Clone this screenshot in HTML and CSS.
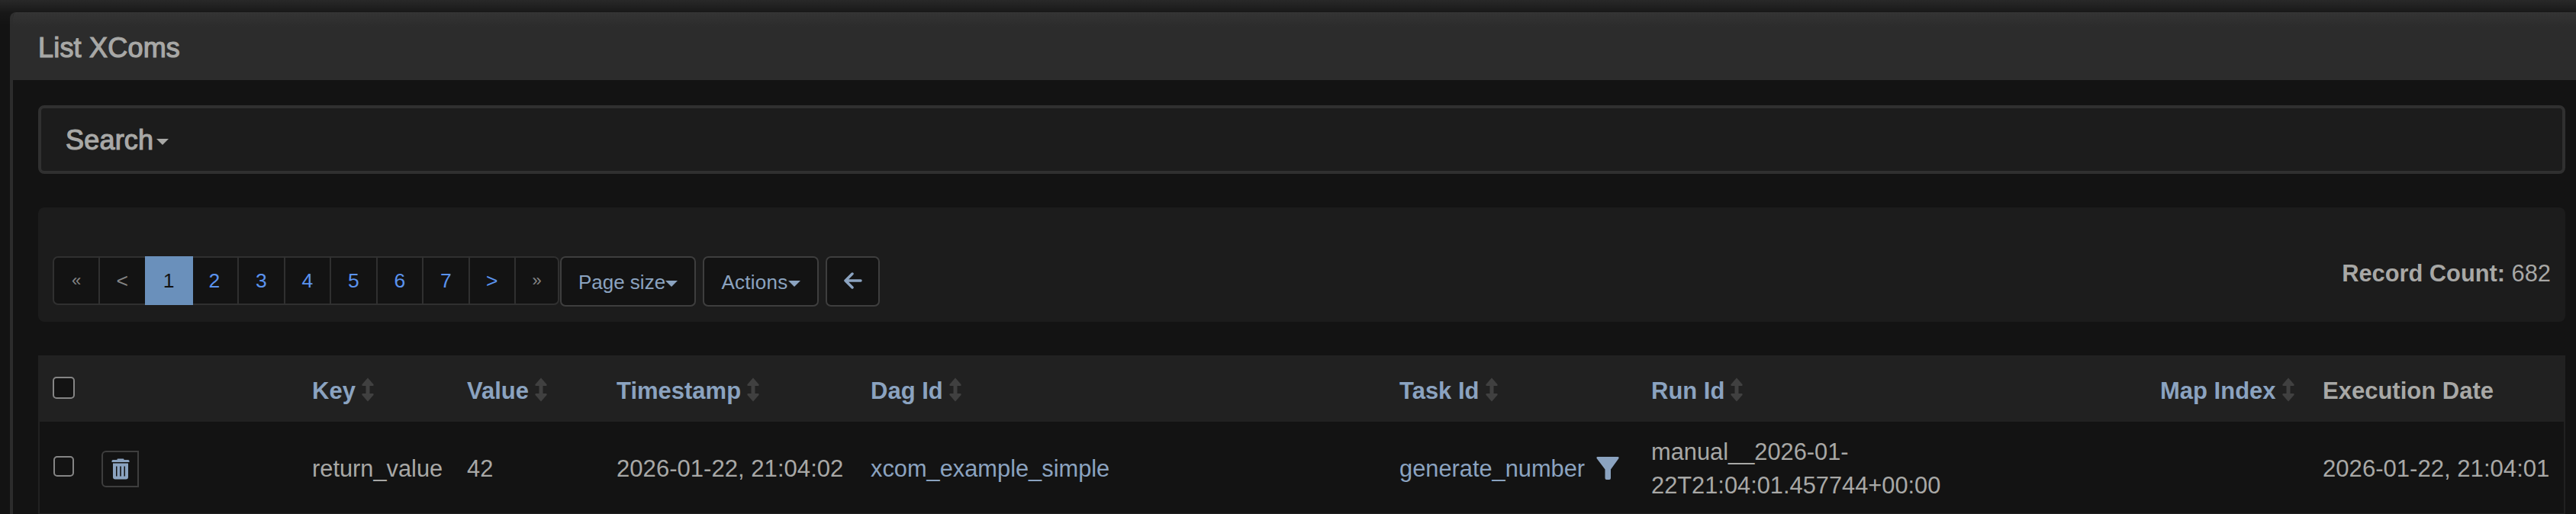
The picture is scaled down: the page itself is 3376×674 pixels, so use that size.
FILE: index.html
```html
<!DOCTYPE html>
<html lang="en">
<head>
<meta charset="UTF-8">
<title>List XComs</title>
<link rel="stylesheet" href="styles.css">
</head>
<body>
<svg class="sprite">
	<symbol id="sort" viewBox="0 0 16 32">
		<path d="M8 0.5 L15.5 9 Q16 11 14.500 11 H10.500 V21 H14.500 Q16 21 15.500 23 L8 31.500 L0.500 23 Q0 21 1.500 21 H5.500 V11 H1.500 Q0 11 0.500 9 Z"/>
	</symbol>
</svg>
<section class="panel">
	<header class="panel-heading">
		<h4 class="panel-title">List XComs</h4>
	</header>
	<div class="panel-body">
		<div class="search">
			<h4 class="panel-title">Search<b class="caret"></b></h4>
		</div>
		<div class="well">
			<ul class="pagination">
				<li class="disabled first"><a href="javascript:;">«</a></li>
				<li class="disabled"><a href="javascript:;">&lt;</a></li>
				<li class="active"><a href="javascript:;">1</a></li>
				<li><a href="javascript:;">2</a></li>
				<li><a href="javascript:;">3</a></li>
				<li><a href="javascript:;">4</a></li>
				<li><a href="javascript:;">5</a></li>
				<li><a href="javascript:;">6</a></li>
				<li><a href="javascript:;">7</a></li>
				<li><a href="javascript:;">&gt;</a></li>
				<li class="disabled last"><a href="javascript:;">»</a></li>
			</ul>
			<button type="button" class="btn size">Page size<b class="caret"></b></button>
			<button type="button" class="btn actions">Actions<b class="caret"></b></button>
			<button type="button" class="btn back">
				<svg width="24" height="22" viewBox="0 0 24 22"><path d="M11 2 L2 11 L11 20 M2 11 H22"/></svg>
			</button>
			<p class="count"><strong>Record Count:</strong> 682</p>
		</div>
		<table class="table">
			<colgroup>
				<col class="c-check"><col class="c-btn"><col class="c-key"><col class="c-value"><col class="c-time">
				<col class="c-dag"><col class="c-task"><col class="c-run"><col class="c-map"><col>
			</colgroup>
			<thead>
				<tr>
					<th><input type="checkbox" class="check all"></th>
					<th></th>
					<th><a href="javascript:;">Key<svg class="sort"><use href="#sort"/></svg></a></th>
					<th><a href="javascript:;">Value<svg class="sort"><use href="#sort"/></svg></a></th>
					<th><a href="javascript:;">Timestamp<svg class="sort"><use href="#sort"/></svg></a></th>
					<th><a href="javascript:;">Dag Id<svg class="sort"><use href="#sort"/></svg></a></th>
					<th><a href="javascript:;">Task Id<svg class="sort"><use href="#sort"/></svg></a></th>
					<th><a href="javascript:;">Run Id<svg class="sort"><use href="#sort"/></svg></a></th>
					<th><a href="javascript:;">Map Index<svg class="sort"><use href="#sort"/></svg></a></th>
					<th>Execution Date</th>
				</tr>
			</thead>
			<tbody>
				<tr>
					<td><input type="checkbox" class="check"></td>
					<td>
						<a href="javascript:;" class="trash">
							<svg width="24" height="28" viewBox="0 0 24 28">
								<path fill-rule="evenodd" d="M7.500 2 V1.500 Q7.500 0.500 8.500 0.500 H15.500 Q16.500 0.500 16.500 1.500 V2 H22 Q23.500 2 23.500 3.500 V5 H0.500 V3.500 Q0.500 2 2 2 Z M2 6.500 H22 V24.500 Q22 27.500 19 27.500 H5 Q2 27.500 2 24.500 Z M6 10.500 V23.500 H7.500 V10.500 Z M11.200 10.500 V23.500 H12.800 V10.500 Z M16.500 10.500 V23.500 H18 V10.500 Z"/>
							</svg>
						</a>
					</td>
					<td>return_value</td>
					<td>42</td>
					<td class="date">2026-01-22, 21:04:02</td>
					<td><a href="javascript:;">xcom_example_simple</a></td>
					<td><a href="javascript:;">generate_number<svg class="filter" viewBox="0 0 30 30"><path d="M1.500 0 H28.500 Q30 0 29.500 2 L19 16.500 V28 Q19 30 17 30 H13.500 Q11.500 30 11.500 28 V16.500 L0.500 2 Q0 0 1.500 0 Z"/></svg></a></td>
					<td>manual__2026-01-<br>22T21:04:01.457744+00:00</td>
					<td></td>
					<td class="date">2026-01-22, 21:04:01</td>
				</tr>
			</tbody>
		</table>
	</div>
</section>
</body>
</html>
```

FILE: styles.css
```css
* {
	box-sizing: border-box;
}
body {
	margin: 0;
	padding: 16px 0 0 13px;
	height: 674px;
	overflow: hidden;
	background: #131313;
	color: #a8a8a6;
	font: 30.8px/44px "Liberation Sans", Arial, sans-serif;
}
/* shadow of the navbar above the page */
body::before {
	content: "";
	position: absolute;
	left: 0;
	right: 0;
	top: 0;
	height: 34px;
	background: linear-gradient(rgba(255,255,255,.09), rgba(255,255,255,.02) 50%, rgba(255,255,255,0));
}
a {
	color: #8ba3c0;
	text-decoration: none;
}
.sprite {
	position: absolute;
	width: 0;
	height: 0;
}
.panel {
	width: 3370px;
	height: 658px;
	overflow: hidden;
	border: 4px solid #2c2c2c;
	border-top: 0;
	border-bottom: 0;
	border-radius: 8px 8px 0 0;
	background: #131313;
}
.panel-heading {
	height: 89px;
	padding: 27px 33px 0;
	background: linear-gradient(#303030, #2c2c2c 20px);
}
.panel-title {
	margin: 0;
	font: 36px/40px "Liberation Sans", Arial, sans-serif;
	letter-spacing: .2px;
	-webkit-text-stroke: 1.2px #a8a8a6;
}
.panel-body {
	width: 3345px;
	padding: 33px 0 0 33px;
}
.search {
	height: 90px;
	padding: 22px 32px;
	border: 4px solid #303030;
	border-radius: 8px;
	background: #1c1c1c;
}
.caret {
	display: inline-block;
	border: 8px solid transparent;
	border-top-color: currentColor;
	border-bottom: 0;
	vertical-align: middle;
}
.search .caret {
	margin-left: 4px;
}
.well {
	display: flex;
	align-items: flex-start;
	height: 150px;
	margin-top: 44px;
	padding: 64px 19px 0;
	border-radius: 8px;
	background: #1c1c1c;
}
.pagination {
	display: flex;
	width: 664px;
	height: 64px;
	margin: 0;
	padding: 0;
	list-style: none;
	border: 2px solid #303030;
	border-radius: 7px;
	background: #131313;
	font-size: 26.500px;
	line-height: 60px;
	text-align: center;
}
.pagination li {
	width: 60.500px;
	border-left: 2px solid #303030;
}
.pagination .first {
	width: 58px;
	border-left: 0;
	font-size: 22px;
}
.pagination .last {
	flex: 1;
	font-size: 22px;
}
.pagination a {
	display: block;
	color: #5b93ef;
}
.pagination .disabled a {
	color: #858585;
}
.pagination .active {
	width: 63px;
	height: 64px;
	margin: -2px -2px 0 0;
	border: 0;
	line-height: 64px;
	background: #6a90bb;
}
.pagination .active + li {
	border-left: 0;
}
.pagination .active a {
	color: #131313;
}
.btn {
	height: 66px;
	padding: 2px 0 0;
	border: 2px solid #3e3e3e;
	border-radius: 7px;
	background: #131313;
	color: #8ba3c0;
	font: 26px/56px "Liberation Sans", Arial, sans-serif;
}
.size {
	width: 178px;
	margin-left: 1px;
}
.actions {
	width: 152px;
	margin-left: 9px;
	letter-spacing: .25px;
}
.back {
	width: 71px;
	margin-left: 9px;
}
.back svg {
	fill: none;
	stroke: #8ba3c0;
	stroke-width: 3.500;
	stroke-linecap: round;
	stroke-linejoin: round;
}
.count {
	margin: 1px 0 0 auto;
}
.table {
	width: 3312px;
	margin-top: 44px;
	border-spacing: 0;
	table-layout: fixed;
	border: 2px solid #212121;
	border-top: 0;
}
.c-check { width: 65px; }
.c-btn { width: 276px; }
.c-key { width: 203px; }
.c-value { width: 196px; }
.c-time { width: 333px; }
.c-dag { width: 693px; }
.c-task { width: 330px; }
.c-run { width: 667px; }
.c-map { width: 213px; }
th,
td {
	padding: 18px 0 14px 16px;
	text-align: left;
	white-space: nowrap;
}
th {
	height: 87px;
	padding-top: 20px;
	background: #212121;
	font-size: 31px;
}
.date {
	font-size: 31.100px;
}
.sort {
	width: 16px;
	height: 32px;
	margin-left: 8px;
	fill: #404040;
	vertical-align: -4px;
}
.check {
	display: block;
	appearance: none;
	width: 27px;
	height: 27px;
	margin: -7px 0 0 2px;
	border: 2px solid #858585;
	border-radius: 5px;
	background: #131313;
}
.all {
	width: 29px;
	height: 29px;
	margin: -8px 0 0 1px;
}
.trash {
	display: flex;
	align-items: center;
	justify-content: center;
	width: 49px;
	height: 48px;
	margin-top: -1px;
	border: 2px solid #3e3e3e;
	border-radius: 6px 0 0 6px;
}
.trash svg,
.filter {
	fill: #8ba3c0;
}
.filter {
	width: 30px;
	height: 30px;
	margin-left: 15px;
	vertical-align: -4px;
}
```
